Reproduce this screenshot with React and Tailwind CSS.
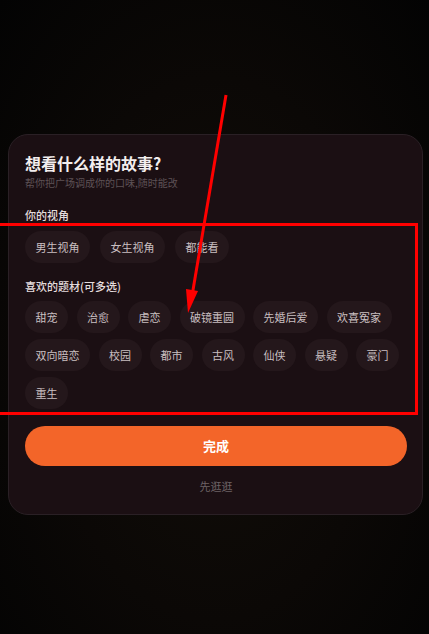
import React, { useState } from "react";

const viewOptions = ["男生视角", "女生视角", "都能看"];
const genres = [
  "甜宠", "治愈", "虐恋", "破镜重圆", "先婚后爱", "欢喜冤家",
  "双向暗恋", "校园", "都市", "古风", "仙侠", "悬疑", "豪门",
  "重生",
];

const Chip = ({ label, active, onClick }) => (
  <button
    onClick={onClick}
    className={
      "h-8 px-[10.5px] rounded-full text-[11px] leading-none " +
      (active ? "bg-[#3a1f18] text-[#f26529]" : "bg-[#24171b] text-[#c9bfc0]")
    }
  >
    {label}
  </button>
);

const App = () => {
  const [view, setView] = useState(null);
  const [picked, setPicked] = useState([]);

  const toggle = (g) =>
    setPicked((p) => (p.includes(g) ? p.filter((x) => x !== g) : [...p, g]));

  return (
    <div
      className="relative w-full h-[634px] overflow-hidden bg-[radial-gradient(ellipse_at_50%_55%,#120e09_0%,#0b0806_55%,#030303_100%)]"
      style={{ fontFamily: '"Noto Sans CJK SC", "Noto Sans", sans-serif' }}
    >
      <div className="pt-[134px] pl-2 pr-[6px]">
        <div className="rounded-[20px] bg-[#1b0f13] border border-[#2a2025] pl-4 pr-[15px] pt-[16px] pb-[20px]">
          <h1 className="text-[16px] leading-6 font-bold text-[#f3eeee]">
            想看什么样的故事?
          </h1>
          <p className="text-[10px] leading-4 text-[#5e5256]">
            帮你把广场调成你的口味,随时能改
          </p>

          <h2 className="mt-4 text-[11px] leading-4 font-medium text-[#e4dcdd]">
            你的视角
          </h2>
          <div className="mt-2 flex flex-wrap gap-x-[10px] gap-y-[6px]">
            {viewOptions.map((v) => (
              <Chip key={v} label={v} active={view === v} onClick={() => setView(v)} />
            ))}
          </div>

          <h2 className="mt-[15px] text-[11px] leading-4 font-medium text-[#e4dcdd]">
            喜欢的题材(可多选)
          </h2>
          <div className="mt-[7px] flex flex-wrap gap-x-[8.5px] gap-y-[6px]">
            {genres.map((g) => (
              <Chip key={g} label={g} active={picked.includes(g)} onClick={() => toggle(g)} />
            ))}
          </div>

          <button className="mt-[17px] w-full h-10 rounded-full bg-[#f36529] text-white text-[13px] font-bold">
            完成
          </button>
          <div className="mt-3 text-center text-[11px] leading-4 text-[#6e6366]">
            先逛逛
          </div>
        </div>
      </div>

      {/* annotation overlay */}
      <div className="absolute left-[-3px] top-[223px] w-[421px] h-[192px] border-[3px] border-[#ff0000] pointer-events-none" />
      <svg
        className="absolute inset-0 pointer-events-none"
        width="429"
        height="634"
        viewBox="0 0 429 634"
      >
        <line x1="226" y1="95" x2="192" y2="296" stroke="#ff0000" strokeWidth="3" />
        <polygon points="186,289 198,291 188,313" fill="#ff0000" />
      </svg>
    </div>
  );
};

export default App;
